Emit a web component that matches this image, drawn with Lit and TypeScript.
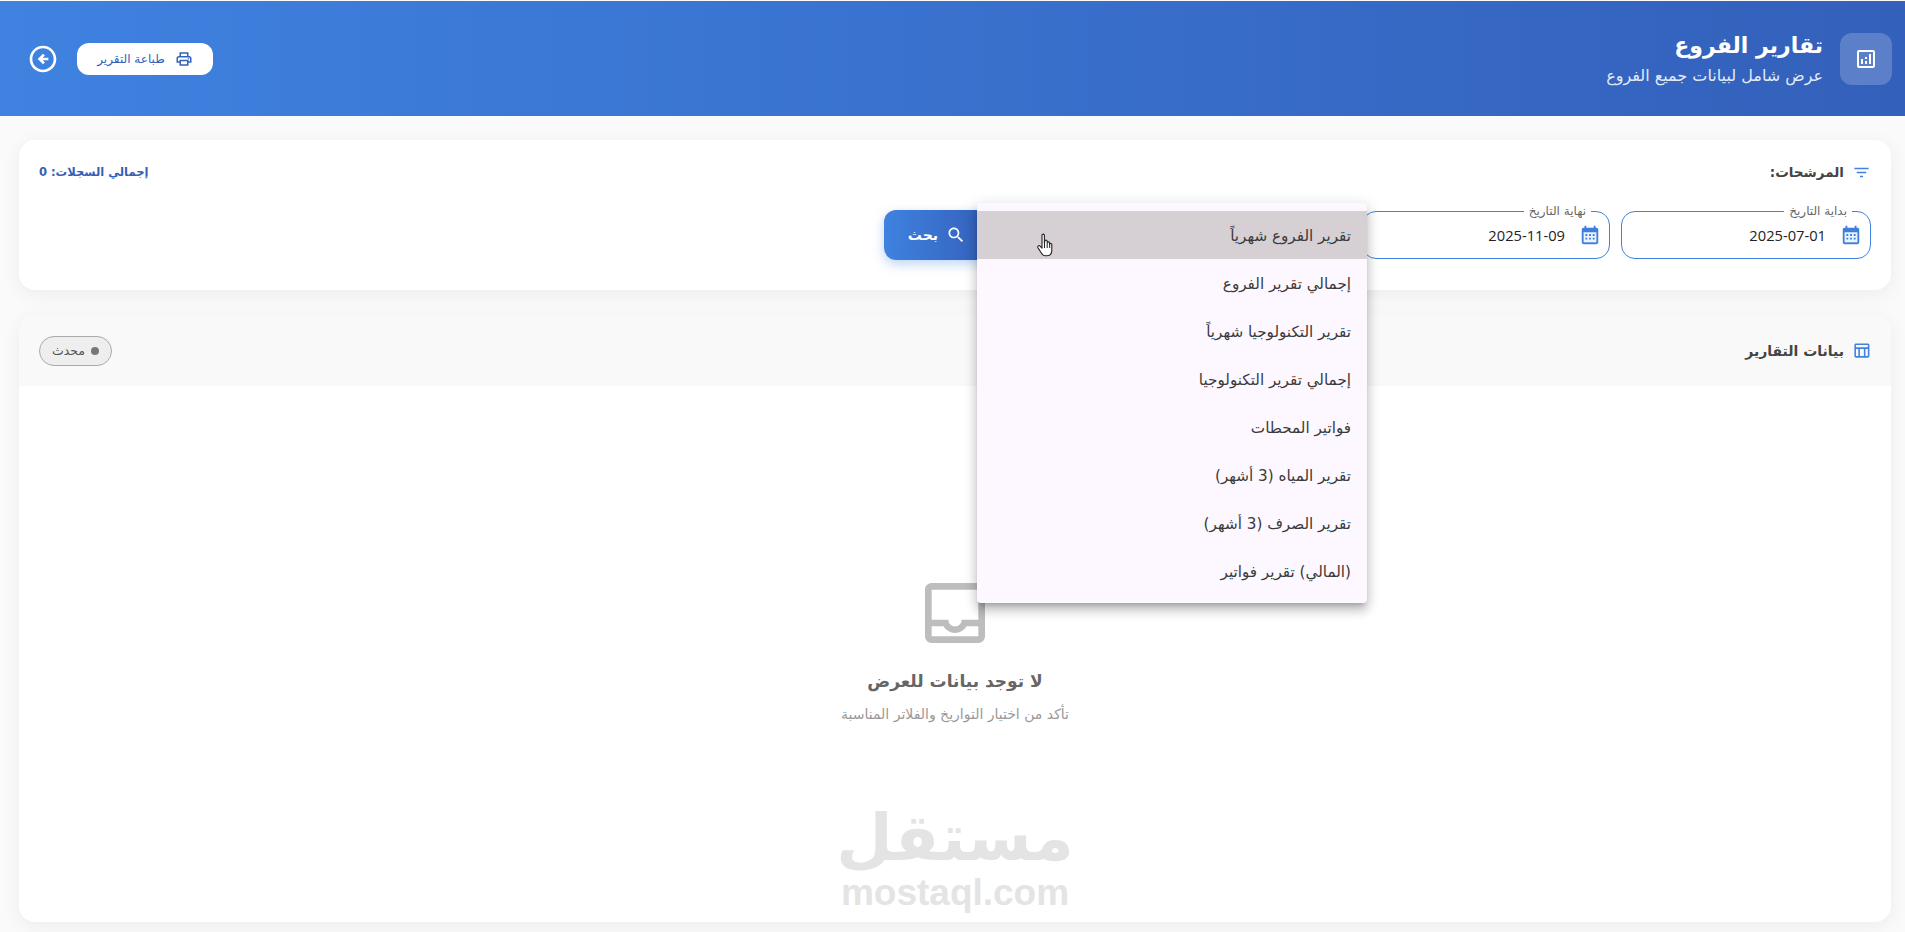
import { LitElement, html, css, svg } from "lit";
import { customElement } from "lit/decorators.js";

const icon = (d: unknown, cls = "") => html`<svg class="ic ${cls}" viewBox="0 0 24 24" fill="currentColor">${d}</svg>`;
const P = {
  chart: svg`<path d="M19 3H5c-1.1 0-2 .9-2 2v14c0 1.1.9 2 2 2h14c1.1 0 2-.9 2-2V5c0-1.1-.9-2-2-2zm0 16H5V5h14v14zM7 12h2v5H7zm8-5h2v10h-2zm-4 7h2v3h-2zm0-4h2v2h-2z"/>`,
  back: svg`<path d="M2 12c0 5.52 4.48 10 10 10s10-4.48 10-10S17.52 2 12 2 2 6.48 2 12zm18 0c0 4.42-3.58 8-8 8s-8-3.58-8-8 3.58-8 8-8 8 3.58 8 8zM8 12l4 4 1.41-1.41L11.83 13H16v-2h-4.17l1.59-1.59L12 8l-4 4z"/>`,
  print: svg`<path d="M19 8h-1V3H6v5H5c-1.66 0-3 1.34-3 3v6h4v4h12v-4h4v-6c0-1.66-1.34-3-3-3zM8 5h8v3H8V5zm8 12v2H8v-4h8v2zm2-2v-2H6v2H4v-4c0-.55.45-1 1-1h14c.55 0 1 .45 1 1v4h-2z"/><circle cx="18" cy="11.5" r="1"/>`,
  filter: svg`<path d="M10 18h4v-2h-4v2zM3 6v2h18V6H3zm3 7h12v-2H6v2z"/>`,
  cal: svg`<path d="M19 4h-1V2h-2v2H8V2H6v2H5c-1.11 0-2 .9-2 2v14c0 1.1.9 2 2 2h14c1.1 0 2-.9 2-2V6c0-1.1-.9-2-2-2z"/><rect x="5" y="9" width="14" height="11" fill="#eaf2fc"/><path d="M7 11h2v2H7zm4 0h2v2h-2zm4 0h2v2h-2zm-8 4h2v2H7zm4 0h2v2h-2zm4 0h2v2h-2z"/>`,
  search: svg`<path d="M15.5 14h-.79l-.28-.27C15.41 12.59 16 11.11 16 9.5 16 5.91 13.09 3 9.5 3S3 5.91 3 9.5 5.91 16 9.5 16c1.61 0 3.09-.59 4.23-1.57l.27.28v.79l5 4.99L20.49 19l-4.99-5zm-6 0C7.01 14 5 11.99 5 9.5S7.01 5 9.5 5 14 7.01 14 9.5 11.99 14 9.5 14z"/>`,
  table: svg`<path d="M20 3H5c-1.1 0-2 .9-2 2v14c0 1.1.9 2 2 2h15c1.1 0 2-.9 2-2V5c0-1.1-.9-2-2-2zm0 2v3H5V5h15zm-5 14h-5v-9h5v9zM5 10h3v9H5v-9zm12 9v-9h3v9h-3z"/>`,
  inbox: svg`<path d="M19 3H5c-1.1 0-2 .9-2 2v14c0 1.1.9 2 2 2h14c1.1 0 2-.9 2-2V5c0-1.1-.9-2-2-2zm0 16H5v-3h3.56c.69 1.19 1.97 2 3.45 2s2.75-.81 3.45-2H19v3zm0-5h-4.99c0 1.1-.9 2-2 2s-2-.9-2-2H5V5h14v9z"/>`,
};

const MENU = [
  "تقرير الفروع شهرياً",
  "إجمالي تقرير الفروع",
  "تقرير التكنولوجيا شهرياً",
  "إجمالي تقرير التكنولوجيا",
  "فواتير المحطات",
  "تقرير المياه (3 أشهر)",
  "تقرير الصرف (3 أشهر)",
  "(المالي) تقرير فواتير",
];

@customElement("app-root")
export class AppRoot extends LitElement {
  static styles = css`
    :host { display: block; height: 932px; overflow: hidden; position: relative; background: #fafafa;
      font-family: "DejaVu Sans", "Noto Sans", sans-serif; color: #333; }
    .page { direction: rtl; display: flex; flex-direction: column; height: 932px; box-sizing: border-box; }
    .ic { width: 24px; height: 24px; flex: none; display: block; }
    header { height: 115px; flex: none; box-sizing: border-box; margin-top: 1px; padding: 0 13px 0 29px;
      display: flex; align-items: center; justify-content: space-between;
      background: linear-gradient(90deg, #3f82e0 0%, #3360bb 100%); color: #fff; }
    .hr { display: flex; align-items: center; gap: 17px; }
    .badge { width: 52px; height: 52px; border-radius: 12px; background: rgba(255,255,255,.2); display: flex; align-items: center; justify-content: center; }
    h1 { margin: 0; font-size: 22px; font-weight: 700; line-height: 32px; padding-top: 1px; }
    .sub { font-size: 16px; line-height: 24px; margin-top: 2px; color: #e3ebf8; }
    .hl { display: flex; align-items: center; gap: 19px; }
    .print { display: flex; align-items: center; gap: 10px; height: 32px; width: 136px; justify-content: center; box-sizing: border-box;
      background: #fff; border-radius: 12px; color: #3460b8; font-size: 12px; margin-inline-end: 1px; }
    .print .ic { width: 18px; height: 18px; }
    .back.ic { width: 32px; height: 32px; color: #fff; margin: 0 -2px; }
    main { flex: 1; padding: 24px 14px 10px 19px; display: flex; flex-direction: column; gap: 25px; min-height: 0; }
    .card { background: #fff; border-radius: 16px; box-shadow: 0 4px 20px rgba(0,0,0,.06); }
    .filters { height: 150px; flex: none; box-sizing: border-box; padding: 20px; }
    .ftop { display: flex; justify-content: space-between; align-items: center; height: 24px; }
    .ftitle { display: flex; align-items: center; gap: 8px; font-size: 13.5px; font-weight: 700; color: #444; }
    .ftitle .ic { width: 19px; height: 19px; color: #3f82e0; }
    .total { font-size: 11.5px; font-weight: 700; color: #3460b8; }
    .row { display: flex; gap: 11px; margin-top: 27px; align-items: flex-start; }
    .field { width: 250px; height: 48px; box-sizing: border-box; border: 1px solid #3f82e0; border-radius: 14px; position: relative;
      display: flex; align-items: center; gap: 14px; padding: 0 8px; }
    .field.end { width: 248px; }
    .field .ic { width: 22px; height: 22px; color: #3f7fdc; }
    .date { font-family: "Open Sans", sans-serif; font-size: 14.7px; color: #222; }
    .label { position: absolute; top: -9px; right: 18px; padding: 0 5px; background: #fff; font-size: 12px; line-height: 16px; color: #666; }
    .slot { width: 350px; height: 48px; flex: none; }
    .btn { width: 106px; height: 50px; border-radius: 12px; background: linear-gradient(90deg, #3f82e0, #3360bb); color: #fff;
      display: flex; align-items: center; gap: 8px; padding-inline-start: 24px; box-sizing: border-box;
      font-weight: 700; font-size: 14px; box-shadow: 0 4px 12px rgba(63,130,224,.35); margin-top: -1px; }
    .btn .ic { width: 20px; height: 20px; }
    .data { flex: 1; min-height: 0; display: flex; flex-direction: column; overflow: hidden; }
    .dhead { height: 71px; flex: none; background: #f9f9f9; display: flex; justify-content: space-between; align-items: center; padding: 0 20px; }
    .dtitle { display: flex; align-items: center; gap: 8px; font-size: 14px; font-weight: 700; color: #444; }
    .dtitle .ic { width: 19px; height: 19px; color: #3f82e0; }
    .chip { display: flex; align-items: center; gap: 6px; height: 30px; width: 73px; justify-content: center; box-sizing: border-box;
      border: 1px solid #aaa; border-radius: 16px; background: #eee; font-size: 12.5px; color: #555; }
    .dot { width: 8px; height: 8px; border-radius: 50%; background: #777; }
    .empty { flex: 1; display: flex; flex-direction: column; align-items: center; padding-top: 187px; color: #666; }
    .empty > .ic { width: 80px; height: 80px; color: #bdbdbd; }
    .empty h3 { margin: 14px 0 0; font-size: 17px; font-weight: 700; color: #666; line-height: 28px; }
    .empty p { margin: 9px 0 0; font-size: 14px; color: #999; line-height: 20px; }
    .wm { margin-top: 81px; display: flex; flex-direction: column; align-items: center; color: #e4e4e4; font-weight: 700; line-height: 1; }
    .wm .ar { font-size: 65px; line-height: 66px; }
    .wm .en { font-family: "Liberation Sans", sans-serif; font-size: 37px; line-height: 40px; margin-top: 2px; }
    .menu { position: absolute; left: 977px; top: 203px; width: 390px; height: 400px; box-sizing: border-box; padding: 8px 0; direction: rtl;
      background: #fdf7ff; border-radius: 4px; box-shadow: 0 5px 5px -3px rgba(0,0,0,.2), 0 8px 10px 1px rgba(0,0,0,.14), 0 3px 14px 2px rgba(0,0,0,.12); }
    .item { height: 48px; display: flex; align-items: center; padding: 2px 16px 0; box-sizing: border-box; font-size: 15.2px; color: #3a3a3a; }
    .item.on { background: #d6d0d4; }
    .hand { position: absolute; left: 1036px; top: 233px; width: 20px; height: 26px; }
  `;

  render() {
    return html`
      <div class="page">
        <header>
          <div class="hr">
            <div class="badge">${icon(P.chart)}</div>
            <div><h1>تقارير الفروع</h1><div class="sub">عرض شامل لبيانات جميع الفروع</div></div>
          </div>
          <div class="hl">
            <div class="print">${icon(P.print)}<span>طباعة التقرير</span></div>
            ${icon(P.back, "back")}
          </div>
        </header>
        <main>
          <section class="card filters">
            <div class="ftop">
              <div class="ftitle">${icon(P.filter)}<span>المرشحات:</span></div>
              <div class="total">إجمالي السجلات: 0</div>
            </div>
            <div class="row">
              <div class="field"><span class="label">بداية التاريخ</span>${icon(P.cal)}<span class="date">2025-07-01</span></div>
              <div class="field end"><span class="label">نهاية التاريخ</span>${icon(P.cal)}<span class="date">2025-11-09</span></div>
              <div class="slot"></div>
              <div class="btn">${icon(P.search)}<span>بحث</span></div>
            </div>
          </section>
          <section class="card data">
            <div class="dhead">
              <div class="dtitle">${icon(P.table)}<span>بيانات التقارير</span></div>
              <div class="chip"><span class="dot"></span><span>محدث</span></div>
            </div>
            <div class="empty">
              ${icon(P.inbox)}
              <h3>لا توجد بيانات للعرض</h3>
              <p>تأكد من اختيار التواريخ والفلاتر المناسبة</p>
              <div class="wm"><span class="ar">مستقل</span><span class="en">mostaql.com</span></div>
            </div>
          </section>
        </main>
      </div>
      <div class="menu">${MENU.map((m, i) => html`<div class="item ${i === 0 ? "on" : ""}">${m}</div>`)}</div>
      <svg class="hand" viewBox="0 0 20 26"><path d="M6 2.2c0-1.5 2.4-1.5 2.4 0V10l.6-2.6c.9-.6 2.1-.2 2.2.8v1.3c.5-1 2.2-.8 2.3.5v.9c.6-.8 2.2-.6 2.3.7v5.6c0 3.4-1.8 5.6-5 5.6H9.500c-2.400 0-3.400-1.200-4.500-3.300L1.900 14.600c-.7-1.500 1.100-2.600 2.200-1.400L6 15.200z" fill="#fff" stroke="#222" stroke-width="1.100" stroke-linejoin="round"/><path d="M8.500 10v5M11.200 10v5M13.700 11v4" stroke="#222" fill="none"/></svg>
    `;
  }
}
